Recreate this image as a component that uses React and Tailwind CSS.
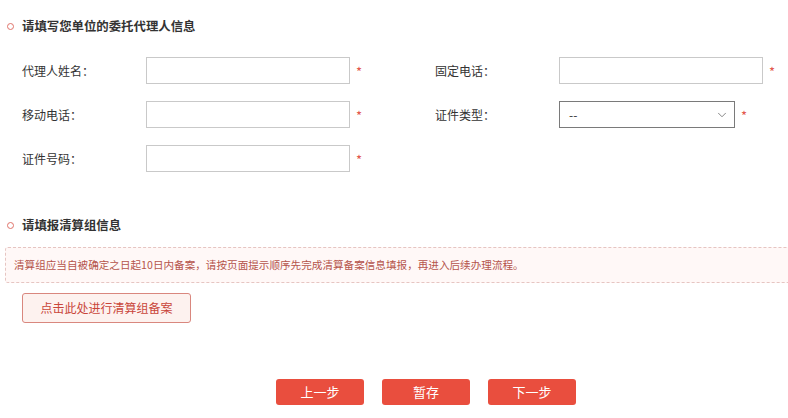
import React from "react";
import { ChevronDown } from "lucide-react";

const font = { fontFamily: '"Microsoft YaHei", "Noto Sans CJK SC", "Noto Sans", sans-serif' };

const SectionTitle = ({ children }) => (
  <div className="flex items-center h-4">
    <span className="ml-[4px] w-[7px] h-[7px] rounded-full border border-[#e0736a]" />
    <span className="ml-[8px] text-[12.4px] font-semibold text-[#333]">{children}</span>
  </div>
);

const Star = () => <span className="ml-[6px] text-[#e2574c] text-[13px] leading-none translate-y-[1px]">*</span>;

const Field = ({ label, children }) => (
  <div className="flex items-center h-[27px]">
    <span className="w-[124px] text-[12px] text-[#333]">{label}</span>
    {children}
    <Star />
  </div>
);

const TextInput = () => (
  <input className="w-[204px] h-[27px] border border-[#c9c9c9] bg-white outline-none px-2 text-[12px]" />
);

const App = () => {
  return (
    <div className="w-[788px] h-[418px] bg-white overflow-hidden" style={font}>
      <div className="pt-[18px] pl-[3px]">
        <SectionTitle>请填写您单位的委托代理人信息</SectionTitle>
      </div>

      <div className="grid grid-cols-[413px_1fr] gap-y-[17px] pl-[22px] mt-[23px]">
        <Field label="代理人姓名：">
          <TextInput />
        </Field>
        <Field label="固定电话：">
          <TextInput />
        </Field>
        <Field label="移动电话：">
          <TextInput />
        </Field>
        <Field label="证件类型：">
          <div className="w-[176px] h-[27px] border border-[#7a7a7a] flex items-center justify-between pl-[9px] pr-[5px] text-[12px] text-[#333]">
            <span>--</span>
            <ChevronDown size={14} strokeWidth={1.2} className="text-[#555]" />
          </div>
        </Field>
        <Field label="证件号码：">
          <TextInput />
        </Field>
      </div>

      <div className="mt-[45px] pl-[3px]">
        <SectionTitle>请填报清算组信息</SectionTitle>
      </div>

      <div className="mt-[14px] ml-[5px] w-[800px] h-[36px] border border-dashed border-[#e6c5c2] rounded-[3px] bg-[#fff8f7] flex items-center pl-[8px] text-[10.6px] text-[#b5544b]">
        清算组应当自被确定之日起10日内备案，请按页面提示顺序先完成清算备案信息填报，再进入后续办理流程。
      </div>

      <div className="mt-[10px] ml-[22px]">
        <button className="w-[169px] h-[30px] border border-[#d9877e] rounded-[3px] bg-[#fdf2ef] text-[12px] text-[#c9463a]">
          点击此处进行清算组备案
        </button>
      </div>

      <div className="mt-[56px] flex gap-[18px] pl-[276px]">
        {["上一步", "暂存", "下一步"].map((t) => (
          <button
            key={t}
            className="w-[88px] h-[26px] rounded-[3px] bg-[#e94e3e] text-white text-[13px]"
          >
            {t}
          </button>
        ))}
      </div>
    </div>
  );
};

export default App;
